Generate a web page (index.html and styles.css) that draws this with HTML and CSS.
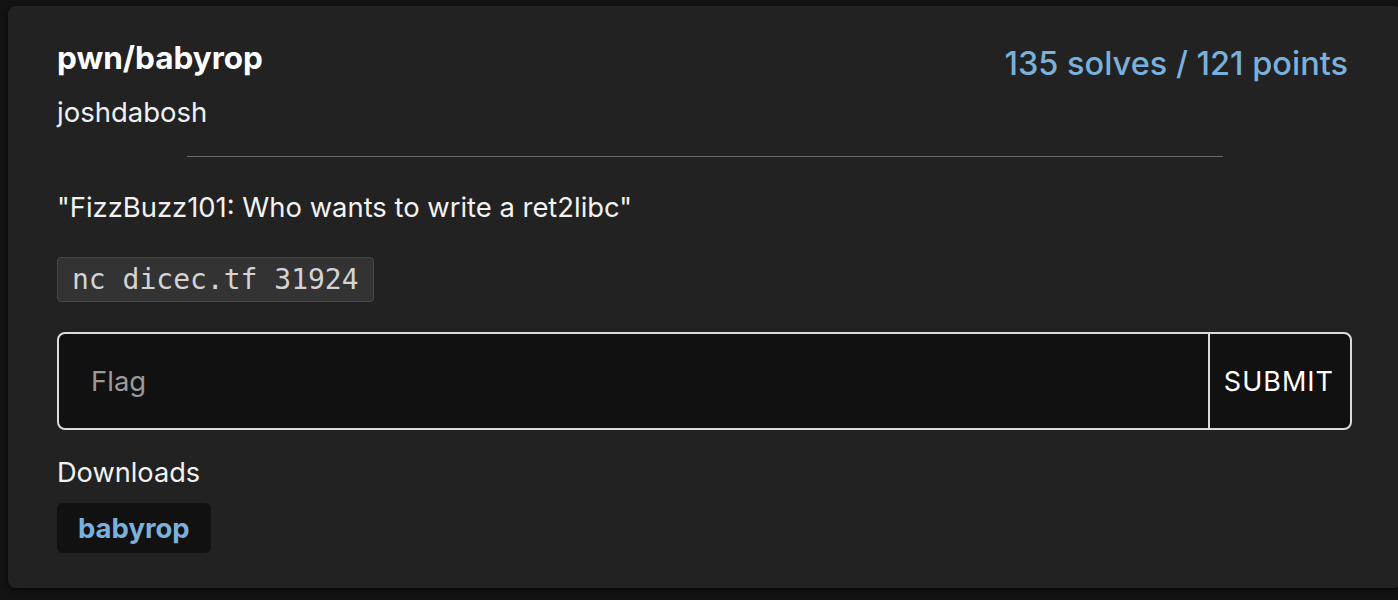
FILE: index.html
```html
<!DOCTYPE html>
<html>
<head>
<meta charset="utf-8">
<link rel="stylesheet" href="styles.css">
</head>
<body>
<div class="card">
  <div class="header">
    <div class="titles">
      <div class="title">pwn/babyrop</div>
      <div class="author">joshdabosh</div>
    </div>
    <div class="score">135 solves / 121 points</div>
  </div>
  <hr class="divider">
  <p class="desc">"FizzBuzz101: Who wants to write a ret2libc"</p>
  <code class="cmd">nc dicec.tf 31924</code>
  <form class="flag-form">
    <input class="flag-input" type="text" placeholder="Flag">
    <button class="submit" type="button">SUBMIT</button>
  </form>
  <div class="downloads-label">Downloads</div>
  <div class="downloads">
    <a class="file" href="#">babyrop</a>
  </div>
</div>
</body>
</html>
```

FILE: styles.css
```css
html, body {
  margin: 0;
  padding: 0;
  background: #131313;
  height: 600px;
  overflow: hidden;
}
body {
  font-family: Inter, "Noto Sans", sans-serif;
  color: #f2f2f2;
}
.card {
  margin: 6px -4px 0 8px;
  height: 582px;
  box-sizing: border-box;
  background: #222222;
  border-radius: 8px;
  padding: 34px 50px 0 49px;
  box-shadow: 0 2px 6px rgba(0,0,0,0.6);
}
.header {
  display: flex;
  justify-content: space-between;
  align-items: flex-start;
}
.title {
  font-size: 31.5px;
  font-weight: 700;
  line-height: 36px;
  color: #fff;
}
.author {
  font-size: 27.5px;
  line-height: 32px;
  margin-top: 20px;
  color: #f0f0f0;
}
.score {
  font-size: 32.5px;
  font-weight: 500;
  color: #7ab0dc;
  line-height: 36px;
  margin-top: 6px;
  margin-right: 4px;
}
.divider {
  width: 80%;
  border: 0;
  border-top: 1px solid #6a6a6a;
  margin: 28px auto 0;
}
.desc {
  font-size: 27.4px;
  line-height: 34px;
  margin: 33px 0 0;
  color: #f2f2f2;
}
.cmd {
  display: block;
  width: fit-content;
  margin-top: 33px;
  font-family: "DejaVu Sans Mono", "Liberation Mono", monospace;
  font-size: 28px;
  line-height: 43px;
  padding: 0 14px;
  background: #333333;
  border: 1px solid #474747;
  border-radius: 4px;
  color: #d4d4d4;
}
.flag-form {
  display: flex;
  margin: 30px 0 0;
  height: 98px;
  box-sizing: border-box;
  border: 2px solid #dcdcdc;
  border-radius: 8px;
  background: #111111;
  overflow: hidden;
}
.flag-input {
  flex: 1;
  background: transparent;
  border: 0;
  outline: none;
  padding: 0 0 0 32px;
  font-family: Inter, "Noto Sans", sans-serif;
  font-size: 27.5px;
  color: #fff;
}
.flag-input::placeholder {
  color: #9a9a9a;
}
.submit {
  background: transparent;
  border: 0;
  border-left: 2px solid #dcdcdc;
  color: #fff;
  font-family: Inter, "Noto Sans", sans-serif;
  font-size: 27px;
  letter-spacing: 1px;
  padding: 0 16px 0 14px;
}
.downloads-label {
  font-size: 27.2px;
  line-height: 34px;
  margin-top: 26px;
  color: #f2f2f2;
}
.downloads {
  display: flex;
  margin-top: 13px;
}
.file {
  display: inline-block;
  background: #111111;
  border-radius: 6px;
  padding: 0 21px;
  line-height: 50px;
  font-size: 27.5px;
  font-weight: 700;
  color: #7ab0dc;
  text-decoration: none;
}
```
